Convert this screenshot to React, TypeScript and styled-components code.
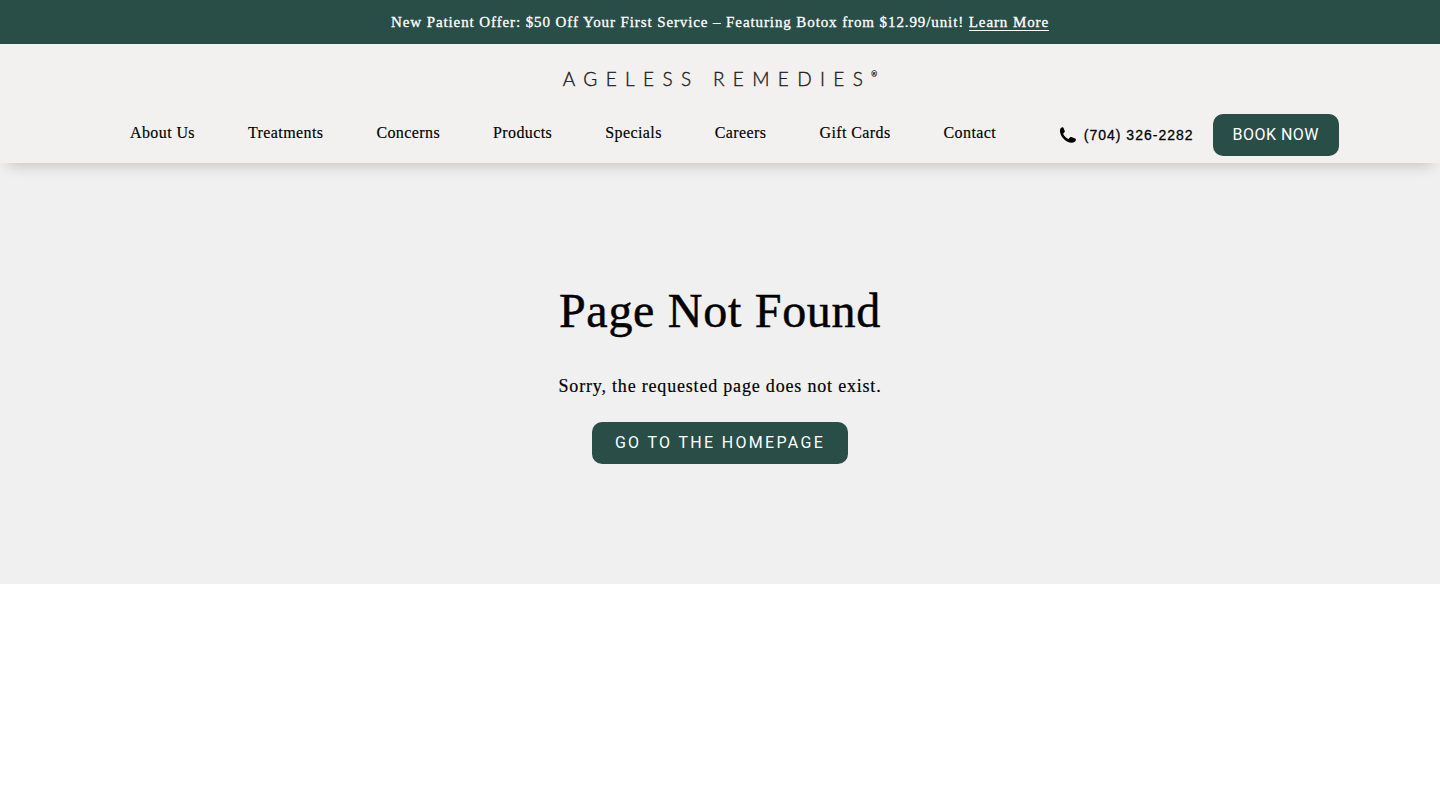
import React from "react";
import styled, { createGlobalStyle } from "styled-components";

const green = "#294e47";
const serif = `"Liberation Serif", "Times New Roman", serif`;
const sans = `"Liberation Sans", Arial, sans-serif`;

const GlobalStyle = createGlobalStyle`
  *, *::before, *::after { box-sizing: border-box; }
  body { margin: 0; background: #fff; color: #000; font-family: ${serif}; }
`;

const OfferBar = styled.aside`
  padding: 12px 24px;
  background: ${green};
  color: #fff;
  font-size: 15px;
  line-height: 20px;
  letter-spacing: 0.06em;
  text-align: center;
  -webkit-text-stroke: 0.02em currentColor;
`;

const OfferLink = styled.a`
  display: inline-block;
  line-height: 16px;
  color: inherit;
  text-decoration: none;
  border-bottom: 1px solid currentColor;
`;

const Header = styled.header`
  position: relative;
  padding: 24px 101px 7px;
  background: #f3f1f0;
  box-shadow: 0 10px 14px -8px rgba(0, 0, 0, 0.2);
`;

const Logo = styled.a`
  display: flex;
  justify-content: center;
  color: #1c1c1c;
  font-family: Lato, sans-serif;
  font-size: 19px;
  font-weight: 300;
  line-height: 22px;
  letter-spacing: 0.44em;
  text-decoration: none;
  white-space: nowrap;
  -webkit-text-stroke: 0.02em currentColor;
`;

const Registered = styled.sup`
  font-size: 7px;
  line-height: 12px;
  letter-spacing: 0;
  vertical-align: top;
`;

const NavRow = styled.div`
  display: flex;
  align-items: center;
  justify-content: space-between;
  margin-top: 24px;
`;

const NavList = styled.ul`
  display: flex;
  flex-wrap: wrap;
  gap: 53px;
  margin: 0;
  padding: 0 0 4px 29px;
  list-style: none;
`;

const NavLink = styled.a`
  color: inherit;
  font-size: 16px;
  line-height: 20px;
  letter-spacing: 0.025em;
  text-decoration: none;
  -webkit-text-stroke: 0.01em currentColor;
`;

const Actions = styled.div`
  display: flex;
  align-items: center;
  gap: 19px;
`;

const PhoneLink = styled.a`
  display: flex;
  align-items: center;
  gap: 8px;
  color: inherit;
  font-family: ${sans};
  font-size: 14px;
  line-height: 20px;
  letter-spacing: 1px;
  text-decoration: none;
  white-space: nowrap;
  -webkit-text-stroke: 0.02em currentColor;
`;

const ActionLink = styled.a<{ $wide?: boolean }>`
  display: inline-block;
  padding: 11px ${(p) => (p.$wide ? 23 : 20)}px;
  border-radius: 10px;
  background: ${green};
  color: #fff;
  font-family: Roboto, ${sans};
  font-size: 16px;
  line-height: 20px;
  letter-spacing: ${(p) => (p.$wide ? "0.145em" : "0.03em")};
  text-decoration: none;
  white-space: nowrap;
`;

const Main = styled.main`
  padding: 120px 24px;
  background: #f0f0f0;
  text-align: center;
`;

const Title = styled.h1`
  margin: 0 0 37px;
  font-size: 48px;
  line-height: 56px;
  font-weight: 400;
  letter-spacing: 0.015em;
  -webkit-text-stroke: 0.01em currentColor;
`;

const Message = styled.p`
  margin: 0 0 26px;
  font-size: 18px;
  line-height: 20px;
  letter-spacing: 0.045em;
  -webkit-text-stroke: 0.01em currentColor;
`;

const navItems = [
  "About Us",
  "Treatments",
  "Concerns",
  "Products",
  "Specials",
  "Careers",
  "Gift Cards",
  "Contact",
];

const PhoneIcon = () => (
  <svg width="16" height="16" viewBox="0 0 16 16" aria-hidden="true">
    <path
      d="M1.2.8C2 .2 3 .1 3.400.8l1.300 2.900c.3.600.1 1.200-.3 1.600l-.9.900c-.3.300-.3.600-.1 1 .8 1.700 2.400 3.400 4.400 4.500.5.300.8.200 1.100-.1l1-1.100c.4-.5.900-.6 1.500-.4l3.700 1.500c.7.300 1 .8.800 1.500-.5 1.700-2.100 2.700-4.100 2.700C6.200 15.900 0 9.500 0 4 0 2.600.4 1.500 1.200.8z"
      fill="currentColor"
    />
  </svg>
);

export default function App() {
  return (
    <>
      <GlobalStyle />
      <OfferBar>
        New Patient Offer: $50 Off Your First Service – Featuring Botox from
        $12.99/unit! <OfferLink href="#offer">Learn More</OfferLink>
      </OfferBar>
      <Header>
        <Logo href="#home">
          AGELESS REMEDIES<Registered>®</Registered>
        </Logo>
        <NavRow>
          <nav aria-label="Main">
            <NavList>
              {navItems.map((item) => (
                <li key={item}>
                  <NavLink href="#menu">{item}</NavLink>
                </li>
              ))}
            </NavList>
          </nav>
          <Actions>
            <PhoneLink href="tel:+17043262282">
              <PhoneIcon />
              (704) 326-2282
            </PhoneLink>
            <ActionLink href="#book">BOOK NOW</ActionLink>
          </Actions>
        </NavRow>
      </Header>
      <Main>
        <Title>Page Not Found</Title>
        <Message>Sorry, the requested page does not exist.</Message>
        <ActionLink href="#home" $wide>
          GO TO THE HOMEPAGE
        </ActionLink>
      </Main>
    </>
  );
}
